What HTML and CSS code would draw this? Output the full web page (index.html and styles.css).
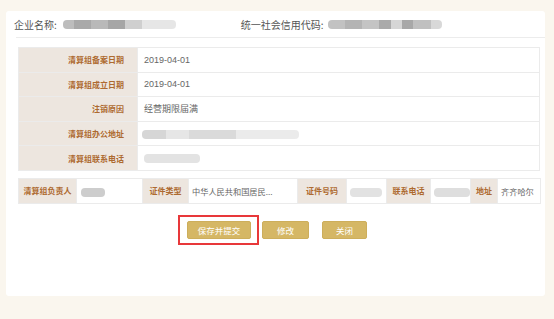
FILE: index.html
```html
<!DOCTYPE html>
<html lang="zh">
<head>
<meta charset="utf-8">
<link rel="stylesheet" href="styles.css">
</head>
<body>
<div class="page">
  <div class="card">
    <div class="header">
      <div class="field">企业名称:<span class="blur blur-name"></span></div>
      <div class="field field-code">统一社会信用代码:<span class="blur blur-code"></span></div>
    </div>
    <div class="divider"></div>
    <table class="info">
      <colgroup><col class="c-label"><col></colgroup>
      <tr><th>清算组备案日期</th><td>2019-04-01</td></tr>
      <tr><th>清算组成立日期</th><td>2019-04-01</td></tr>
      <tr><th>注销原因</th><td>经营期限届满</td></tr>
      <tr><th>清算组办公地址</th><td><span class="blur blur-addr"></span></td></tr>
      <tr><th>清算组联系电话</th><td><span class="blur blur-tel"></span></td></tr>
    </table>
    <table class="person">
      <colgroup>
        <col style="width:58px"><col style="width:66px"><col style="width:46px"><col style="width:109px">
        <col style="width:49px"><col style="width:40px"><col style="width:44px"><col style="width:40px">
        <col style="width:27px"><col style="width:43px">
      </colgroup>
      <tr>
        <th>清算组负责人</th><td><span class="blur blur-person"></span></td>
        <th>证件类型</th><td>中华人民共和国居民...</td>
        <th>证件号码</th><td><span class="blur blur-id"></span></td>
        <th>联系电话</th><td><span class="blur blur-phone"></span></td>
        <th>地址</th><td>齐齐哈尔</td>
      </tr>
    </table>
    <div class="actions">
      <div class="highlight"><button class="btn btn-save">保存并提交</button></div>
      <button class="btn btn-edit">修改</button>
      <button class="btn btn-close">关闭</button>
    </div>
  </div>
</div>
</body>
</html>
```

FILE: styles.css
```css
html, body {
  margin: 0;
  padding: 0;
  background: #faf6ee;
  font-family: "Noto Sans CJK SC", "Liberation Sans", sans-serif;
}
.page {
  width: 554px;
  height: 319px;
  padding: 11px 9px 0 6px;
  box-sizing: border-box;
}
.card {
  background: #ffffff;
  border-radius: 3px;
  height: 285px;
  box-sizing: border-box;
  padding-top: 1px;
}
.header {
  display: flex;
  align-items: center;
  height: 25px;
  padding-left: 8px;
  font-size: 10px;
  color: #555555;
}
.field {
  display: flex;
  align-items: center;
  white-space: nowrap;
}
.field-code {
  margin-left: 65px;
}
.divider {
  margin-left: 10px;
  border-top: 1px solid #ececec;
}
.blur {
  display: inline-block;
  height: 9px;
  border-radius: 4px;
  filter: blur(0.7px);
  vertical-align: middle;
}
.blur-name {
  width: 113px;
  margin-left: 6px;
  background: linear-gradient(90deg, #bdbdbd 0 10%, #a9a9a9 10% 25%, #b9b9b9 25% 40%, #a6a6a6 40% 55%, #cfcfcf 55% 70%, #e6e6e6 70% 100%);
}
.blur-code {
  width: 114px;
  margin-left: 4px;
  background: linear-gradient(90deg, #c2c2c2 0 15%, #b4b4b4 15% 30%, #c4c4c4 30% 45%, #aaaaaa 45% 55%, #d6d6d6 55% 65%, #a8a8a8 65% 75%, #c0c0c0 75% 90%, #d8d8d8 90% 100%);
}
.blur-addr {
  width: 157px;
  margin-left: -2px;
  background: linear-gradient(90deg, #d6d6d6 0 15%, #e6e6e6 15% 30%, #dadada 30% 60%, #ebebeb 60% 100%);
}
.blur-tel {
  width: 56px;
  background: #e3e3e3;
}
.blur-person {
  width: 24px;
  margin-left: 1px;
  background: #cdcdcd;
}
.blur-id {
  width: 32px;
  background: #e2e2e2;
}
.blur-phone {
  width: 36px;
  background: #dedede;
}
table {
  border-collapse: collapse;
  table-layout: fixed;
  margin-left: 12px;
  width: 522px;
}
th, td {
  border: 1px solid #ebebeb;
  padding: 0;
  white-space: nowrap;
  overflow: hidden;
}
th {
  background: #ede6df;
  color: #ad6a30;
  font-size: 8px;
  font-weight: bold;
}
td {
  color: #666666;
  font-size: 8.5px;
}
.info {
  margin-top: 9px;
}
.info .c-label {
  width: 119px;
}
.info th, .info td {
  height: 23.6px;
}
.info th {
  text-align: right;
  padding-right: 13px;
}
.info td {
  padding-left: 6px;
  font-family: "Liberation Sans", "Noto Sans CJK SC", sans-serif;
  font-size: 9px;
}
.info td.cjk {
  font-size: 8.5px;
}
.person {
  margin-top: 7px;
}
.person th, .person td {
  height: 24px;
}
.person th {
  text-align: center;
}
.person td {
  padding-left: 3px;
  text-overflow: clip;
  font-size: 8.2px;
}
.actions {
  display: flex;
  align-items: center;
  margin-top: 11px;
  padding-left: 172px;
}
.highlight {
  border: 2px solid #e8383a;
  padding: 4px 6px 4px 7px;
  display: flex;
}
.btn {
  height: 18px;
  padding: 0;
  border: 1px solid #cdae5b;
  border-radius: 2px;
  background: #d5b765;
  color: #ffffff;
  font-family: "Noto Sans CJK SC", "Liberation Sans", sans-serif;
  font-size: 8.5px;
  line-height: 16px;
}
.btn-save {
  width: 64px;
}
.btn-edit {
  width: 47px;
  margin-left: 3px;
}
.btn-close {
  width: 45px;
  margin-left: 13px;
}
```
